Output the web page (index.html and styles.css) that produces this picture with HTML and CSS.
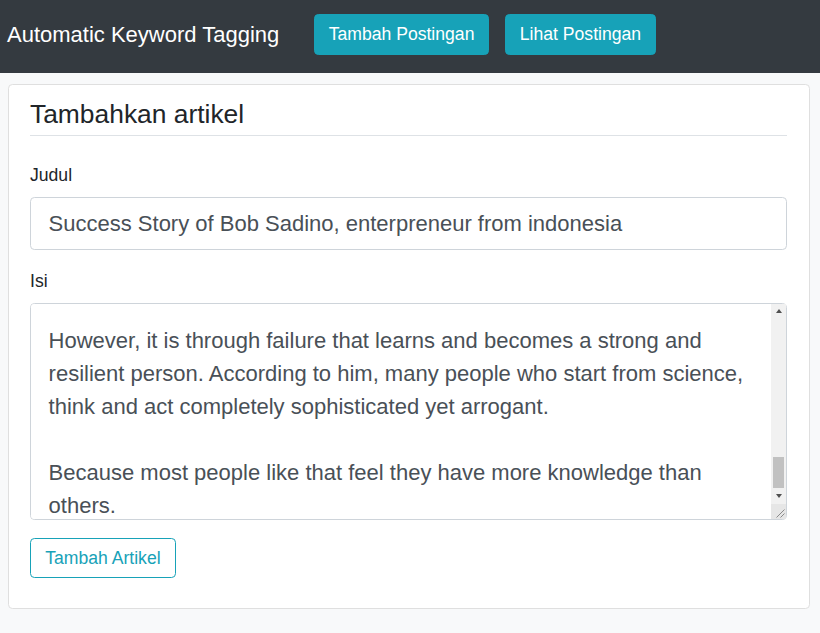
FILE: index.html
```html
<!DOCTYPE html>
<html lang="id">
<head>
<meta charset="utf-8">
<title>Automatic Keyword Tagging</title>
<link rel="stylesheet" href="styles.css">
</head>
<body>
<nav class="navbar">
  <span class="brand">Automatic Keyword Tagging</span>
  <a class="btn btn-info" href="#">Tambah Postingan</a>
  <a class="btn btn-info btn-next" href="#">Lihat Postingan</a>
</nav>
<main class="card">
  <h4 class="card-title">Tambahkan artikel</h4>
  <form class="form">
    <div class="form-group">
      <label class="label" for="judul">Judul</label>
      <input class="control" id="judul" type="text" value="Success Story of Bob Sadino, enterpreneur from indonesia">
    </div>
    <div class="form-group">
      <label class="label" for="isi">Isi</label>
      <div class="textarea-wrap">
        <textarea class="control isi" id="isi">Bob Sadino was born in Tanjung Karang, Lampung,
on March 9, 1933, the youngest of five children.

After his father died, he inherited the family
wealth because his siblings were already settled.
He used the money to travel around the world and
lived in the Netherlands for several years.

When he returned to Indonesia, he decided not to
work for anyone else. He rented out his car as a
taxi, but one day the car had an accident.

He then worked as a construction laborer to
support his family. A friend suggested that he
raise chickens and sell their eggs.

His business slowly grew into a supermarket
called Kem Chicks, which became famous among
expatriates living in Jakarta.

Bob Sadino was known for his unique appearance,
always wearing short pants wherever he went.

He believed that entrepreneurs should dare to
take risks and should not be afraid to fail,
because failure is the best teacher of all.

He often said that many people fail because
they think too much and act too little.

However, it is through failure that learns and becomes a strong and
resilient person. According to him, many people who start from science,
think and act completely sophisticated yet arrogant.

Because most people like that feel they have more knowledge than
others.</textarea>
        <div class="scrollbar" aria-hidden="true">
          <span class="sb-button"><span class="sb-arrow-up"></span></span>
          <span class="sb-track"><span class="sb-thumb"></span></span>
          <span class="sb-button"><span class="sb-arrow-down"></span></span>
          <span class="sb-corner">
            <svg width="15" height="15" viewBox="0 0 15 15">
              <line x1="13.5" y1="5.5" x2="5.5" y2="13.5" stroke="#8a8a8a" stroke-width="1"/>
              <line x1="13.5" y1="9.5" x2="9.5" y2="13.5" stroke="#8a8a8a" stroke-width="1"/>
            </svg>
          </span>
        </div>
      </div>
    </div>
    <button class="btn btn-outline-info" type="button">Tambah Artikel</button>
  </form>
</main>
<script src="script.js"></script>
</body>
</html>
```
FILE: styles.css
```css
html {
  font-size: 17.6px;
}

body {
  margin: 0;
  background: #f8f9fa;
  font-family: "Liberation Sans", Arial, sans-serif;
  font-size: 17.6px;
  line-height: 1.5;
  color: #212529;
}

.navbar {
  display: flex;
  align-items: center;
  height: 73px;
  box-sizing: border-box;
  padding: 0 0 4px 7px;
  background: #343a40;
}

.brand {
  flex: 0 0 307px;
  font-size: 22px;
  line-height: 32px;
  color: #fff;
  white-space: nowrap;
}

.btn {
  display: inline-block;
  box-sizing: border-box;
  font-family: inherit;
  font-size: 17.6px;
  line-height: 26.4px;
  padding: 6.3px 13.7px;
  border: 1px solid transparent;
  border-radius: 4.4px;
  text-decoration: none;
  white-space: nowrap;
  cursor: pointer;
}

.btn-info {
  background: #17a2b8;
  border-color: #17a2b8;
  color: #fff;
}

.btn-next {
  margin-left: 16px;
}

.btn-outline-info {
  margin-top: 1px;
  background: transparent;
  border-color: #17a2b8;
  color: #17a2b8;
  padding: 5.8px 14.2px;
}

.card {
  display: block;
  margin: 11px 10px 0 8px;
  padding: 14px 22px 29.5px 21px;
  background: #fff;
  border: 1px solid #dfdfdf;
  border-radius: 4.4px;
}

.card-title {
  margin: 0 0 26.3px;
  padding-bottom: 4.3px;
  border-bottom: 1px solid #dee2e6;
  font-size: 26.4px;
  font-weight: 400;
  line-height: 1.2;
  color: #212529;
}

.form-group {
  margin-bottom: 17.6px;
}

.label {
  display: inline-block;
  margin-bottom: 8.8px;
}

.control {
  display: block;
  width: 100%;
  box-sizing: border-box;
  margin: 0;
  padding: 8.8px 17.6px;
  font-family: inherit;
  font-size: 22px;
  line-height: 33px;
  color: #495057;
  background: #fff;
  border: 1px solid #ced4da;
  border-radius: 4.4px;
}

.textarea-wrap {
  position: relative;
}

.isi {
  height: 217px;
  padding-right: 17.6px;
  resize: both;
}

.scrollbar {
  position: absolute;
  top: 1px;
  right: 1px;
  bottom: 1px;
  width: 15px;
  display: flex;
  flex-direction: column;
  background: #f1f1f1;
}

.sb-button {
  flex: 0 0 15px;
  display: flex;
  align-items: center;
  justify-content: center;
}

.sb-arrow-up {
  width: 0;
  height: 0;
  border-left: 3.5px solid transparent;
  border-right: 3.5px solid transparent;
  border-bottom: 4px solid #505050;
}

.sb-arrow-down {
  width: 0;
  height: 0;
  border-left: 3.5px solid transparent;
  border-right: 3.5px solid transparent;
  border-top: 4px solid #505050;
}

.sb-track {
  flex: 1 1 auto;
  display: flex;
  flex-direction: column;
  justify-content: flex-end;
}

.sb-thumb {
  height: 31px;
  margin: 0 2px 1px;
  background: #c1c1c1;
}

.sb-corner {
  flex: 0 0 15px;
  display: block;
  background: #e6e6e6;
}

.sb-corner svg {
  display: block;
}
```
FILE: script.js
```js
var isi = document.getElementById('isi');
isi.scrollTop = isi.scrollHeight - isi.clientHeight - 12;
```
